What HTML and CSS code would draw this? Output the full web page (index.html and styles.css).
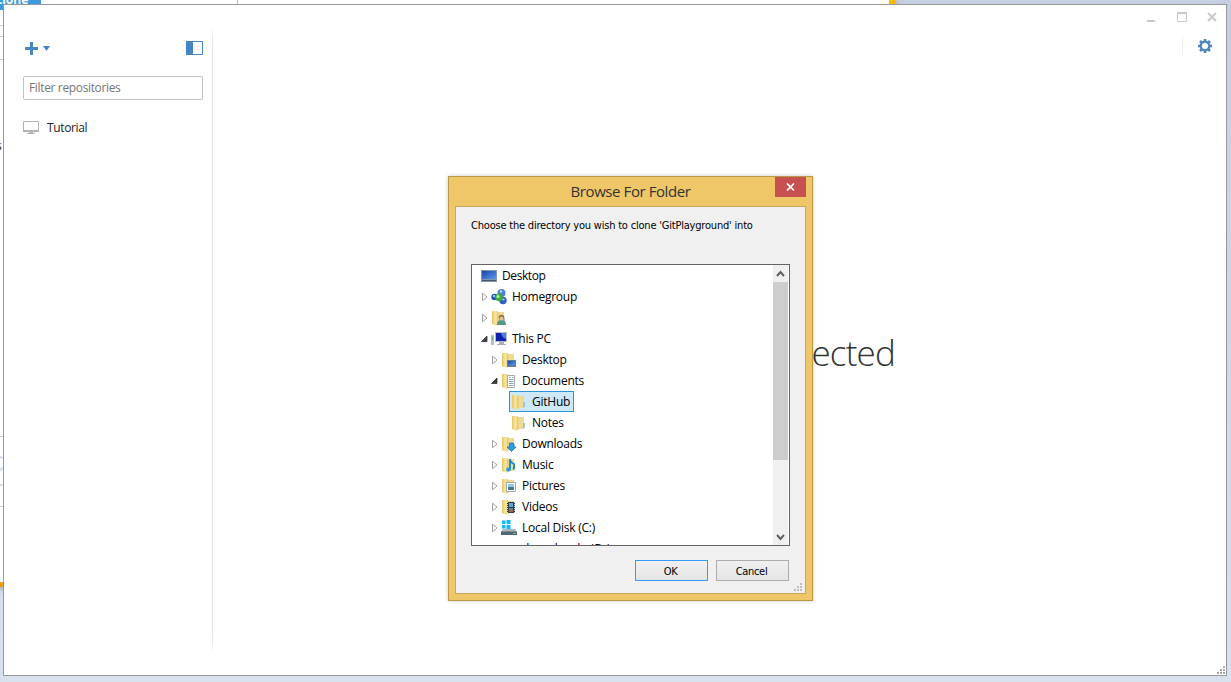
FILE: index.html
```html
<!DOCTYPE html>
<html lang="en">
<head>
<meta charset="utf-8">
<title>Repositories</title>
<link rel="stylesheet" href="styles.css">
</head>
<body>
<svg width="0" height="0" class="defs" aria-hidden="true">
  <defs>
    <linearGradient id="gold" x1="0" x2="1"><stop offset="0" stop-color="#e3c465"/><stop offset=".5" stop-color="#f8e49a"/><stop offset="1" stop-color="#efd88a"/></linearGradient>
    <linearGradient id="screen" x1="0" x2="1" y2="1"><stop offset="0" stop-color="#1746a4"/><stop offset="1" stop-color="#5c9bef"/></linearGradient>
    <symbol id="folder" viewBox="0 0 16 16"><path d="M1 1h6v1h6v12H6.500l-1 1.500L1 14z" fill="#e9cf7d"/><path d="M1 1h5l1 1v13l-1.500.500L1 14z" fill="url(#gold)"/><path d="M7 2.500L12.500 2v11.500L7 14.500z" fill="#f0db92"/><path d="M6.800 2.500v12" stroke="#d0b05a" stroke-width=".6"/><path d="M12.500 8h1.300v5h-1.300z" fill="#8fb8c8"/></symbol>
    <symbol id="closed" viewBox="0 0 8 10"><path d="M2.500 1.200v7.600L7 5z" fill="#fff" stroke="#a0a0a0"/></symbol>
    <symbol id="open" viewBox="0 0 8 10"><path d="M7 2v5.500H1.500z" fill="#404040" stroke="#262626" stroke-width=".7"/></symbol>
  </defs>
</svg>
<div class="desktop">
  <div class="back-window">
    <span class="back-tab">clone</span>
    <i class="rule r1"></i><i class="rule r2"></i><i class="rule r3"></i><i class="rule r4"></i><i class="rule r5"></i>
    <i class="back-divider"></i><span class="back-letter">s</span>
    <svg class="back-mark" width="3" height="32"><path d="M0 1l3 1M0 15l3-4M0 29h3" stroke="#cfddec" stroke-width="2" fill="none"/></svg>
  </div>
  <main class="app">
    <aside class="sidebar">
      <div class="toolbar">
        <svg width="27" height="14"><path d="M0 7.500h13M6.500 1v13" stroke="#4886c2" stroke-width="3"/><path d="M18 5h7l-3.500 5z" fill="#4886c2"/></svg>
        <svg width="17" height="14"><path d="M.500.500h16v13H.500z" fill="#fff" stroke="#4886c2"/><path d="M0 0h7v14H0z" fill="#4886c2"/></svg>
      </div>
      <div class="filter"><span>Filter repositories</span></div>
      <div class="repo"><svg width="16" height="13"><path d="M.500.500h15v9H.500z" fill="none" stroke="#b3b3b3"/><path d="M0 9h16v2H0zM6 11h4v1H6zM4 12h8v1H4z" fill="#b3b3b3"/></svg><span>Tutorial</span></div>
    </aside>
    <section class="content">
      <div class="window-buttons">
        <svg width="72" height="12"><path d="M0 8h8v2H0z" fill="#c9c9c9"/><path d="M30.500.500h9v9h-9zM30 1.500h10" fill="none" stroke="#c9c9c9"/><path d="M61 1l8 8M69 1l-8 8" stroke="#c9c9c9" stroke-width="2"/></svg>
      </div>
      <div class="settings"><svg width="14" height="14" viewBox="-7 -7 14 14"><circle r="4.300" fill="none" stroke="#4886c2" stroke-width="2.200"/><path d="M0-7v2M0 5v2M-7 0h2M5 0h2M-5-5l1.500 1.500M3.500 3.500L5 5M-5 5l1.500-1.500M3.500-3.500L5-5" stroke="#4886c2" stroke-width="2.600"/></svg></div>
      <p class="empty">ected</p>
    </section>
    <svg class="grip" width="9" height="9"><path d="M6 0h2v2H6zM3 3h2v2H3zM6 3h2v2H6zM0 6h2v2H0zM3 6h2v2H3zM6 6h2v2H6z" fill="#aaa"/></svg>
  </main>

  <div class="dialog">
    <div class="titlebar"><h1><span>Browse For Folder</span></h1><button class="close"><svg width="9" height="8"><path d="M1 .500l7 7M8 .500l-7 7" stroke="#fff" stroke-width="1.700"/></svg></button></div>
    <div class="dialog-body">
      <p class="prompt">Choose the directory you wish to clone 'GitPlayground' into</p>
      <div class="listbox">
        <ul class="tree">
          <li class="l1 root"><svg class="icon" viewBox="0 0 16 16"><path d="M0 2h16v12H0z" fill="#8798ad"/><path d="M1 3h14v8H1z" fill="url(#screen)"/><path d="M1 12h14v1H1z" fill="#46566b"/></svg><span>Desktop</span></li>
          <li class="l1"><svg class="arrow"><use href="#closed"/></svg><svg class="icon" viewBox="0 0 16 16"><circle cx="3.500" cy="8" r="3.200" fill="#2556b5"/><circle cx="10.500" cy="4" r="4" fill="#4f83d2"/><circle cx="12" cy="11.500" r="3.700" fill="#2f5fc0"/><circle cx="8" cy="8.500" r="3.700" fill="#3fae3b"/><circle cx="7" cy="7.500" r="1.500" fill="#b8edaa"/><circle cx="3" cy="7" r="1.200" fill="#9dc4ef"/><circle cx="10" cy="2.500" r="1.300" fill="#b7d7f5"/><circle cx="12.500" cy="10.500" r="1.100" fill="#a9cdf2"/></svg><span>Homegroup</span></li>
          <li class="l1"><svg class="arrow"><use href="#closed"/></svg><svg class="icon" viewBox="0 0 16 16"><use href="#folder"/><path d="M6 15q0-5 4.500-5t4.500 5z" fill="#559585"/><circle cx="10.500" cy="7.500" r="2.800" fill="#8d714d"/><circle cx="10.500" cy="8.500" r="2" fill="#e3bd91"/></svg></li>
          <li class="l1"><svg class="arrow"><use href="#open"/></svg><svg class="icon" viewBox="0 0 16 16"><path d="M4 1h12v10H4z" fill="#b6bdc8"/><path d="M5 2h10v8H5z" fill="#1020ad"/><path d="M10 2h5v6q-4-1-5-6z" fill="#4e7be6"/><path d="M8 11h5v2h2v1H6v-1h2z" fill="#a4aebb"/><path d="M0 4h3v10H0z" fill="#b5bdc6"/><path d="M1 6h1v3H1z" fill="#62ad66"/></svg><span>This PC</span></li>
          <li class="l2"><svg class="arrow"><use href="#closed"/></svg><svg class="icon" viewBox="0 0 16 16"><use href="#folder"/><path d="M6 8h9v7H6z" fill="#667b98"/><path d="M7 9h7v4H7z" fill="url(#screen)"/></svg><span>Desktop</span></li>
          <li class="l2"><svg class="arrow"><use href="#open"/></svg><svg class="icon" viewBox="0 0 16 16"><use href="#folder"/><path d="M6.500 2.500h7v12h-7z" fill="#fff" stroke="#a5a9b0"/><path d="M8 4.500h2M11 4.500h1.500M8 6.500h4.500M8 8.500h4.500M8 10.500h4.500M8 12.500h4.500" stroke="#8ba5c8"/></svg><span>Documents</span></li>
          <li class="l3 selected"><svg class="icon"><use href="#folder"/></svg><span>GitHub</span></li>
          <li class="l3"><svg class="icon"><use href="#folder"/></svg><span>Notes</span></li>
          <li class="l2"><svg class="arrow"><use href="#closed"/></svg><svg class="icon" viewBox="0 0 16 16"><use href="#folder"/><path d="M8.500 7h4v4h2.500l-4.500 4.500L6 11h2.500z" fill="#2f9ce6" stroke="#1976bd" stroke-width=".8"/></svg><span>Downloads</span></li>
          <li class="l2"><svg class="arrow"><use href="#closed"/></svg><svg class="icon" viewBox="0 0 16 16"><use href="#folder"/><path d="M9 2v10M9 3q1 3 4 4 1 3-1 5" fill="none" stroke="#1686cd" stroke-width="1.800"/><ellipse cx="7.500" cy="12.500" rx="2.500" ry="2" fill="#3097d9"/></svg><span>Music</span></li>
          <li class="l2"><svg class="arrow"><use href="#closed"/></svg><svg class="icon" viewBox="0 0 16 16"><use href="#folder"/><path d="M5.500 4.500h9v9h-9z" fill="#fff" stroke="#a2a7aa"/><path d="M7 6h6v6H7z" fill="#91c9ea"/><path d="M7 9h6v3H7z" fill="#487c84"/></svg><span>Pictures</span></li>
          <li class="l2"><svg class="arrow"><use href="#closed"/></svg><svg class="icon" viewBox="0 0 16 16"><use href="#folder"/><path d="M6 3h8v11H6z" fill="#333d45"/><path d="M8 4h4v4H8z" fill="#5fa0d8"/><path d="M8 9h4v4H8z" fill="#5488a8"/><path d="M8 11h4v2H8z" fill="#a8623d"/><path d="M6.500 3v11M13.500 3v11" stroke="#d4dadd" stroke-dasharray="1 1"/></svg><span>Videos</span></li>
          <li class="l2"><svg class="arrow"><use href="#closed"/></svg><svg class="icon" viewBox="0 0 16 16"><path d="M1 .500h3.500V4H1zM5.500 0h4v4h-4zM1 5h3.500v3.500H1zM5.500 5h4v4h-4z" fill="#13b8ee"/><path d="M2 9h12l2 3v3H0v-3z" fill="#a9b4bb"/><path d="M0 11.500h16V15H0z" fill="#526773"/><path d="M12 13h3v1h-3z" fill="#54d76d"/></svg><span>Local Disk (C:)</span></li>
          <li class="l2 last"><svg class="arrow"><use href="#closed"/></svg><svg class="icon"></svg><span>downloads (D:)</span></li>
        </ul>
        <div class="scrollbar">
          <svg width="15" height="17"><path d="M4 11l3.500-4 3.500 4" fill="none" stroke="#606060" stroke-width="2"/></svg>
          <i class="thumb"></i><i class="track"></i>
          <svg width="15" height="17"><path d="M4 7l3.500 4L11 7" fill="none" stroke="#606060" stroke-width="2"/></svg>
        </div>
      </div>
      <div class="actions"><button class="btn primary">OK</button><button class="btn">Cancel</button></div>
      <svg class="dialog-grip" width="8" height="8"><path d="M6 0h2v2H6zM3 3h2v2H3zM6 3h2v2H6zM0 6h2v2H0zM3 6h2v2H3zM6 6h2v2H6z" fill="#bfbfbf"/></svg>
    </div>
  </div>
</div>
</body>
</html>
```
FILE: styles.css
```css
* { box-sizing: border-box; }
body { margin: 0; overflow: hidden; font-family: "Open Sans", "Noto Sans", sans-serif; font-size: 12px; color: #222; }
svg { display: block; flex: none; }
button { padding: 0; border: 0; font: inherit; color: inherit; letter-spacing: inherit; }
.defs { position: absolute; }
.desktop { position: relative; width: 1231px; height: 682px; overflow: hidden; background: linear-gradient(#c6cfe2, #d8e1ee); }

.back-window { position: absolute; left: 0; top: 0; width: 896px; height: 587px; background: #fff; border-right: 7px solid #fdbb00; border-bottom: 5px solid #f39a00; box-shadow: 0 2px 6px #8591a8; }
.back-tab { position: absolute; left: 0; top: 0; width: 41px; height: 10px; background: #3b9ade; color: #fff; font-weight: 700; line-height: 0; text-indent: -4px; overflow: hidden; }
.rule { position: absolute; left: 0; width: 3px; height: 1px; background: #ccc; }
.r1 { top: 25px; }
.r2 { top: 36px; }
.r3 { top: 59px; }
.r4 { top: 436px; }
.r5 { top: 506px; }
.back-divider { position: absolute; left: 237px; top: 0; width: 1px; height: 4px; background: #bbb; }
.back-letter { position: absolute; left: -4px; top: 137px; }
.back-mark { position: absolute; left: 0; top: 456px; }

.app { position: absolute; left: 3px; top: 4px; width: 1224px; height: 672px; border: 1px solid #999; background: #fff; display: flex; }
.sidebar { width: 209px; height: 629px; margin-top: 20px; padding: 16px 9px 0 19px; border-right: 1px solid; border-image: linear-gradient(#fff, #e2e2e2 3%, #e2e2e2 97%, #fff) 1; }
.toolbar { display: flex; justify-content: space-between; padding-left: 2px; }
.filter { height: 24px; margin-top: 21px; border: 1px solid #c2c2c2; border-radius: 2px; padding-left: 5px; line-height: 22px; color: #777; letter-spacing: -.35px; }
.repo { display: flex; align-items: center; gap: 8px; margin-top: 19px; line-height: 18px; letter-spacing: -.35px; }
.repo svg { margin-top: -1px; }
.content { flex: 1; display: flex; flex-direction: column; align-items: flex-end; }
.window-buttons { padding: 7px 7px 0 0; }
.settings { margin: 13px 14px 0 0; height: 18px; padding: 2px 0 0 15px; border-left: 1px solid #eee; }
.empty { margin: 268px 331px 0 0; font-size: 35px; line-height: 60px; letter-spacing: -.8px; font-weight: 300; color: #333; white-space: nowrap; }
.grip { position: absolute; right: 0; bottom: 0; }

.dialog { position: absolute; left: 448px; top: 176px; width: 365px; height: 425px; border: 1px solid #b99947; background: #efc768; box-shadow: 0 0 4px rgba(0,0,0,.22); padding: 0 6px 6px; color: #000; }
.titlebar { height: 29px; display: flex; justify-content: flex-end; }
.titlebar h1 { flex: 1; margin: 0; padding-left: 31px; text-align: center; font-size: 15px; line-height: 29px; font-weight: 400; letter-spacing: -.42px; color: #333; }
.close { width: 31px; height: 20px; background: #c75050; display: flex; align-items: center; justify-content: center; }
.dialog-body { position: relative; height: 388px; border: 1px solid #c9a758; background: #f0f0f0; padding: 10px 15px; }
.prompt { margin: 0; height: 47px; line-height: 17px; font-family: "DejaVu Sans Condensed", "DejaVu Sans", sans-serif; font-size: 11px; letter-spacing: -.2px; white-space: nowrap; }
.listbox { width: 319px; height: 282px; border: 1px solid #646464; background: #fff; display: flex; overflow: hidden; }
.tree { flex: 1; margin: 0; padding: 0; list-style: none; letter-spacing: -.25px; }
.tree li { display: flex; align-items: center; height: 21px; line-height: 21px; white-space: nowrap; }
.arrow { width: 8px; height: 10px; margin-right: 3px; }
.icon { width: 16px; height: 16px; margin-right: 5px; }
.l1 { padding-left: 8px; }
.l2 { padding-left: 18px; }
.tree .root { padding-left: 9px; letter-spacing: -.4px; }
.tree .last { letter-spacing: .4px; }
.l3 { margin-left: 37px; padding-left: 2px; }
.selected { width: 65px; border: 1px solid #2a94d4; background: #cde8f6; }
.tree .selected { padding-left: 1px; }
.scrollbar { width: 15px; margin-right: 1px; display: flex; flex-direction: column; background: #f0f0f0; }
.thumb { height: 178px; background: #cdcdcd; }
.track { flex: 1; }
.actions { display: flex; justify-content: flex-end; gap: 8px; margin: 14px 1px 0 0; font-family: "DejaVu Sans Condensed", "DejaVu Sans", sans-serif; font-size: 11px; letter-spacing: -.3px; }
.btn { width: 73px; height: 21px; padding: 1px 2px 0 0; border: 1px solid #acacac; background: linear-gradient(#f0f0f0, #e5e5e5); }
.primary { border-color: #3399ff; }
.dialog-grip { position: absolute; right: 3px; bottom: 2px; }
```
